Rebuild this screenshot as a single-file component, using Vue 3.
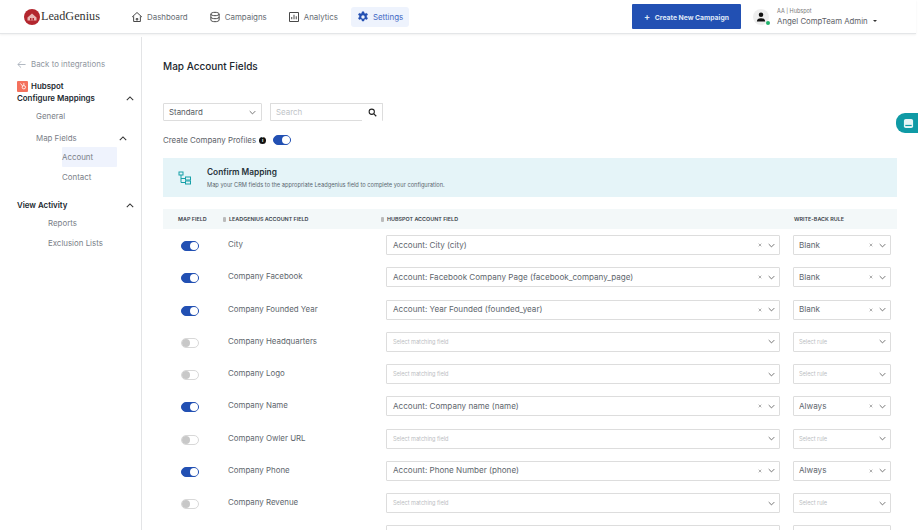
<template>
  <div class="page">
    <header class="topbar">
      <div class="brand">
        <svg class="brand-mark" viewBox="0 0 16 16" width="16" height="16">
          <circle cx="8" cy="8" r="8" fill="#b3262e" />
          <path d="M3.500 8.500 8 4.500l4.500 4v3h-9z" fill="#e9b7b5" />
          <path d="M6 9h1.500v2.500H6zM8.500 9H10v2.500H8.500z" fill="#b3262e" />
        </svg>
        <span class="brand-name">LeadGenius</span>
      </div>
      <nav class="nav">
        <a v-for="item in navItems" :key="item.label" class="nav-item" :class="{ active: item.active }">
          <svg viewBox="0 0 16 16" width="12" height="12" class="nav-icon">
            <path v-for="(d, i) in item.paths" :key="i" :d="d" />
            <circle v-if="item.active" cx="8" cy="8" r="2.300" class="gear-hole" />
          </svg>
          {{ item.label }}
        </a>
      </nav>
      <div class="top-right">
        <button class="create-btn"><span class="plus">+</span> Create New Campaign</button>
        <div class="user">
          <div class="avatar">
            <svg viewBox="0 0 16 16" width="12" height="12">
              <circle cx="8" cy="5" r="3" fill="#111" />
              <path d="M2.500 14c0-3 2-4.500 5.500-4.500s5.500 1.500 5.500 4.500z" fill="#111" />
            </svg>
            <span class="online"></span>
          </div>
          <div class="user-text">
            <div class="user-org">AA | Hubspot</div>
            <div class="user-name">Angel CompTeam Admin <span class="caret"></span></div>
          </div>
        </div>
      </div>
    </header>

    <div class="body">
      <aside class="sidebar">
        <a class="back">
          <svg viewBox="0 0 10 10" width="9" height="9"><path d="M9.500 5H1M4.500 1.500 1 5l3.500 3.500" fill="none" stroke="#a9b1bb" stroke-width="1" /></svg>
          Back to integrations
        </a>
        <div class="hub-line">
          <span class="hub-logo">
            <svg viewBox="0 0 12 12" width="10" height="10"><circle cx="7" cy="7.500" r="2" fill="none" stroke="#fff" stroke-width="1" /><path d="M7 5.500V2.500M3 3l2.500 3" stroke="#fff" stroke-width="1" /></svg>
          </span>
          <b>Hubspot</b>
        </div>
        <div class="side-head"><b>Configure Mappings</b><svg class="chev" viewBox="0 0 10 6" width="8" height="5"><path d="M1 5l4-4 4 4" /></svg></div>
        <div class="side-link lvl1">General</div>
        <div class="side-head sub"><span>Map Fields</span><svg class="chev" viewBox="0 0 10 6" width="8" height="5"><path d="M1 5l4-4 4 4" /></svg></div>
        <div class="side-link lvl2 selected">Account</div>
        <div class="side-link lvl2">Contact</div>
        <div class="side-head activity"><b>View Activity</b><svg class="chev" viewBox="0 0 10 6" width="8" height="5"><path d="M1 5l4-4 4 4" /></svg></div>
        <div class="side-link lvl3 first">Reports</div>
        <div class="side-link lvl3">Exclusion Lists</div>
      </aside>

      <main class="main">
        <h1 class="title">Map Account Fields</h1>
        <div class="filters">
          <div class="standard">Standard
            <svg class="arrow" viewBox="0 0 10 6" width="7" height="5"><path d="M1 1l4 4 4-4" /></svg>
          </div>
          <div class="search">
            <span class="search-input">Search</span>
            <span class="search-btn">
              <svg viewBox="0 0 12 12" width="9" height="9"><circle cx="5" cy="5" r="3.500" fill="none" stroke="#222" stroke-width="1.400" /><path d="M7.800 7.800 11 11" stroke="#222" stroke-width="1.600" /></svg>
            </span>
          </div>
        </div>
        <div class="profiles">
          Create Company Profiles
          <span class="info">i</span>
          <span class="toggle on"></span>
        </div>
        <div class="banner">
          <svg class="banner-icon" viewBox="0 0 14 14" width="14" height="14">
            <path d="M3 4v7.500h4M3 7.500h4" fill="none" stroke="#16a0a8" stroke-width="1" />
            <rect x="1" y="1" width="4" height="3" fill="none" stroke="#16a0a8" />
            <rect x="7.500" y="6" width="5" height="3" fill="none" stroke="#16a0a8" />
            <rect x="7.500" y="10" width="5" height="3" fill="none" stroke="#16a0a8" />
          </svg>
          <div>
            <div class="banner-title">Confirm Mapping</div>
            <div class="banner-text">Map your CRM fields to the appropriate Leadgenius field to complete your configuration.</div>
          </div>
        </div>

        <div class="grid thead">
          <div class="th-map">MAP FIELD</div>
          <div class="th-sort"><span class="sort"></span>LEADGENIUS ACCOUNT FIELD</div>
          <div class="th-sort"><span class="sort"></span>HUBSPOT ACCOUNT FIELD</div>
          <div class="th-rule">WRITE-BACK RULE</div>
        </div>
        <div v-for="row in rows" :key="row.name" class="grid row">
          <div class="toggle-cell"><span class="toggle" :class="{ on: row.field }"></span></div>
          <div class="row-name">{{ row.name }}</div>
          <div class="select">
            <span v-if="row.field" class="value">{{ row.field }}</span>
            <span v-else class="placeholder">Select matching field</span>
            <span class="controls">
              <svg v-if="row.field" class="clear" viewBox="0 0 6 6" width="4" height="4"><path d="M1 1l4 4M5 1 1 5" /></svg>
              <svg class="arrow" viewBox="0 0 10 6" width="7" height="5"><path d="M1 1l4 4 4-4" /></svg>
            </span>
          </div>
          <div class="select rule">
            <span v-if="row.rule" class="value">{{ row.rule }}</span>
            <span v-else class="placeholder">Select rule</span>
            <span class="controls">
              <svg v-if="row.rule" class="clear" viewBox="0 0 6 6" width="4" height="4"><path d="M1 1l4 4M5 1 1 5" /></svg>
              <svg class="arrow" viewBox="0 0 10 6" width="7" height="5"><path d="M1 1l4 4 4-4" /></svg>
            </span>
          </div>
        </div>
        <!-- next row only peeks in at the bottom of the window -->
        <div class="grid row">
          <div></div>
          <div></div>
          <div class="select"></div>
          <div class="select rule"></div>
        </div>
      </main>
    </div>

    <button class="help-tab">
      <svg viewBox="0 0 12 12" width="11" height="11">
        <rect x="1" y="1" width="10" height="10" rx="2" fill="#e6f5f6" />
        <rect x="2.500" y="7.500" width="7" height="1.300" fill="#0f9aa5" />
      </svg>
    </button>
  </div>
</template>

<script setup>
const navItems = [
  { label: 'Dashboard', paths: ['M1.500 8 8 2l6.500 6', 'M3.500 7v7h9V7', 'M7 10h2v2H7z'] },
  { label: 'Campaigns', paths: ['M2.500 4c0-3 11-3 11 0s-11 3-11 0z', 'M2.500 4v8c0 3 11 3 11 0V4', 'M2.500 8c0 3 11 3 11 0'] },
  { label: 'Analytics', paths: ['M2 2h12v12H2z', 'M5 11V8', 'M8 11V5', 'M11 11V7'] },
  {
    label: 'Settings',
    active: true,
    paths: ['M6.800 1h2.400l.4 2 1.500.8 1.900-.8 1.200 2-1.500 1.400v1.600l1.500 1.400-1.200 2-1.900-.8-1.500.8-.4 2H6.800l-.4-2-1.500-.8-1.900.8-1.200-2 1.500-1.400V6.400L1.800 5l1.200-2 1.900.8 1.500-.8z']
  }
];

const rows = [
  { name: 'City', field: 'Account: City (city)', rule: 'Blank' },
  { name: 'Company Facebook', field: 'Account: Facebook Company Page (facebook_company_page)', rule: 'Blank' },
  { name: 'Company Founded Year', field: 'Account: Year Founded (founded_year)', rule: 'Blank' },
  { name: 'Company Headquarters' },
  { name: 'Company Logo' },
  { name: 'Company Name', field: 'Account: Company name (name)', rule: 'Always' },
  { name: 'Company Owler URL' },
  { name: 'Company Phone', field: 'Account: Phone Number (phone)', rule: 'Always' },
  { name: 'Company Revenue' }
];
</script>

<style>
html, body {
  margin: 0;
  height: 100%;
  overflow: hidden;
  background: #fff;
}
</style>

<style scoped>
.page {
  width: 918px;
  height: 530px;
  overflow: hidden;
  position: relative;
  font-family: Inter, "Open Sans", sans-serif;
  color: #555b63;
  font-size: 7.900px;
}

.topbar {
  width: 916px;
  height: 34px;
  box-sizing: border-box;
  display: flex;
  align-items: center;
  padding-left: 24px;
  border-bottom: 1px solid #e4e6e8;
  box-shadow: 0 1px 2px rgba(0, 0, 0, 0.06);
}

.brand {
  display: flex;
  align-items: center;
  gap: 1px;
  width: 101px;
}

.brand-name {
  font-family: "Liberation Serif", serif;
  font-size: 12.200px;
  color: #333;
}

.nav {
  display: flex;
  align-items: center;
}

.nav-item {
  display: flex;
  align-items: center;
  gap: 4px;
  height: 20px;
  padding: 0 6px;
  margin-right: 9px;
  border-radius: 3px;
  color: #666c73;
}

.nav-item.active {
  background: #eef3fd;
  color: #3f68c4;
  margin-left: -2px;
}

.nav-icon path {
  fill: none;
  stroke: #444;
  stroke-width: 1.300;
}

.active .nav-icon path {
  fill: #2450b2;
  stroke: #2450b2;
  stroke-width: 0.600;
}

.gear-hole {
  fill: #eef3fd;
}

.top-right {
  margin-left: auto;
  display: flex;
  align-items: center;
}

.create-btn {
  width: 109px;
  height: 25px;
  padding: 0;
  border: none;
  border-radius: 1px;
  background: #2250b3;
  color: #dfe7f7;
  font-family: inherit;
  font-size: 6.800px;
  font-weight: 700;
  margin-right: 12px;
}

.plus {
  font-size: 9px;
  margin-right: 3px;
}

.user {
  display: flex;
  align-items: center;
  gap: 8px;
  width: 163px;
}

.avatar {
  width: 16px;
  height: 16px;
  border-radius: 50%;
  background: #eee;
  display: flex;
  align-items: center;
  justify-content: center;
  position: relative;
}

.online {
  position: absolute;
  right: -1px;
  bottom: 0;
  width: 4px;
  height: 4px;
  border-radius: 50%;
  background: #1fb36b;
}

.user-org {
  font-size: 5.500px;
  color: #777;
  margin-bottom: 2px;
}

.user-name {
  font-size: 7.800px;
  color: #5d6167;
  white-space: nowrap;
}

.caret {
  display: inline-block;
  margin-left: 3px;
  vertical-align: middle;
  border: 2px solid transparent;
  border-top-color: #333;
  border-bottom: none;
}

.body {
  display: flex;
  height: 496px;
}

.sidebar {
  width: 142px;
  box-sizing: border-box;
  margin-top: 3px;
  border-right: 1px solid #e3e4e6;
  padding: 22px 6px 0 17px;
  flex-shrink: 0;
}

.back {
  display: flex;
  align-items: center;
  gap: 5px;
  color: #8f96a0;
  height: 10px;
  margin-bottom: 11px;
}

.hub-line {
  display: flex;
  align-items: center;
  gap: 3px;
  height: 12px;
  color: #20262d;
}

.hub-logo {
  width: 11px;
  height: 11px;
  border-radius: 1px;
  background: #f4715d;
  display: flex;
  align-items: center;
  justify-content: center;
}

.side-head {
  display: flex;
  align-items: center;
  justify-content: space-between;
  color: #20262d;
  height: 12px;
  padding-right: 1px;
}

.side-head b,
.hub-line b {
  font-weight: 600;
}

.side-head.sub {
  color: #7a8088;
  padding: 0 8px 0 19px;
  margin-top: 5px;
  height: 14px;
}

.side-head.activity {
  margin-top: 11px;
  height: 14px;
}

.chev path,
.arrow path {
  fill: none;
  stroke: #333;
  stroke-width: 1.300;
}

.arrow path {
  stroke: #666;
}

.side-link {
  color: #7a8088;
  height: 20px;
  line-height: 20px;
}

.lvl1 {
  padding-left: 19px;
  margin-top: 2px;
}

.lvl2 {
  margin-left: 45px;
  padding-left: 0;
  width: 55px;
}

.lvl3 {
  padding-left: 31px;
}

.lvl3.first {
  margin-top: 1px;
}

.selected {
  background: #eff3fd;
  border-radius: 1px;
  margin-top: 2px;
}

.main {
  flex: 1;
  padding: 0 21px;
}

.title {
  margin: 26px 0 0;
  font-size: 10px;
  line-height: 12px;
  font-weight: 500;
  color: #20262d;
}

.filters {
  display: flex;
  gap: 8px;
  margin-top: 31px;
}

.standard,
.search {
  height: 18px;
  box-sizing: border-box;
  border: 1px solid #ddd;
  border-radius: 1px;
  display: flex;
  align-items: center;
  justify-content: space-between;
}

.standard {
  width: 99px;
  padding: 0 5px;
}

.search {
  width: 113px;
  color: #c0c4c8;
  border-bottom: none;
}

.search-input {
  flex: 1;
  height: 17px;
  line-height: 17px;
  box-sizing: border-box;
  padding-left: 5px;
  border-bottom: 1px solid #ddd;
}

.search-btn {
  width: 20px;
  display: flex;
  align-items: center;
  justify-content: center;
}

.profiles {
  display: flex;
  align-items: center;
  margin-top: 13px;
  height: 12px;
  color: #5c6269;
}

.info {
  width: 7px;
  height: 7px;
  border-radius: 50%;
  background: #111;
  color: #fff;
  font-size: 5px;
  line-height: 7px;
  text-align: center;
  margin: 0 7px 0 3px;
  font-weight: 700;
}

.toggle {
  display: inline-block;
  position: relative;
  width: 18px;
  height: 10px;
  box-sizing: border-box;
  border-radius: 5px;
  background: #fff;
  border: 1px solid #d8d8d8;
}

.toggle::after {
  content: "";
  position: absolute;
  left: 0;
  top: 0;
  width: 8px;
  height: 8px;
  border-radius: 50%;
  background: #c8c8c8;
}

.toggle.on {
  background: #2250b3;
  border-color: #2250b3;
}

.toggle.on::after {
  left: auto;
  right: 0;
  background: #fff;
}

.banner {
  margin-top: 12px;
  height: 39px;
  background: #e5f4f8;
  display: flex;
  align-items: center;
  gap: 15px;
  padding-left: 15px;
}

.banner-title {
  font-size: 8.300px;
  font-weight: 600;
  color: #25323a;
  margin-bottom: 4px;
}

.banner-text {
  font-size: 5.700px;
  color: #5a6870;
}

.grid {
  display: grid;
  grid-template-columns: 65px 158px 394px 111px;
  align-items: center;
}

.thead {
  margin-top: 12px;
  height: 20px;
  background: #f3f8f9;
  font-size: 5.400px;
  font-weight: 600;
  color: #3a424a;
}

.th-map {
  padding-left: 15px;
}

.th-sort {
  display: flex;
  align-items: center;
  gap: 3px;
  margin-left: -5px;
}

.th-rule {
  margin-left: 14px;
  white-space: nowrap;
}

.sort {
  width: 3px;
  height: 5px;
  border-radius: 1px;
  background: #bbb;
}

.row {
  height: 32.250px;
  align-items: start;
  padding-top: 6px;
  box-sizing: border-box;
}

.toggle-cell {
  padding-left: 18px;
  padding-top: 6px;
  display: flex;
  align-items: center;
}

.row-name {
  color: #60666d;
  line-height: 18px;
}

.select {
  height: 20px;
  box-sizing: border-box;
  border: 1px solid #ddd;
  border-radius: 1px;
  display: flex;
  align-items: center;
  justify-content: space-between;
  padding: 0 4px 0 6px;
}

.select.rule {
  margin-left: 13px;
  padding-left: 5px;
}

.value {
  color: #60666d;
  font-size: 8.100px;
  margin-top: -1px;
}

.placeholder {
  font-size: 5.600px;
  color: #bbbec2;
}

.controls {
  display: flex;
  align-items: center;
  gap: 6px;
}

.clear path {
  fill: none;
  stroke: #888;
  stroke-width: 1;
}

.help-tab {
  position: absolute;
  right: 0;
  top: 113px;
  width: 22px;
  height: 20px;
  padding: 0 0 0 3px;
  border: none;
  border-radius: 9px 0 0 9px;
  background: #0f9aa5;
  display: flex;
  align-items: center;
  justify-content: center;
}
</style>
